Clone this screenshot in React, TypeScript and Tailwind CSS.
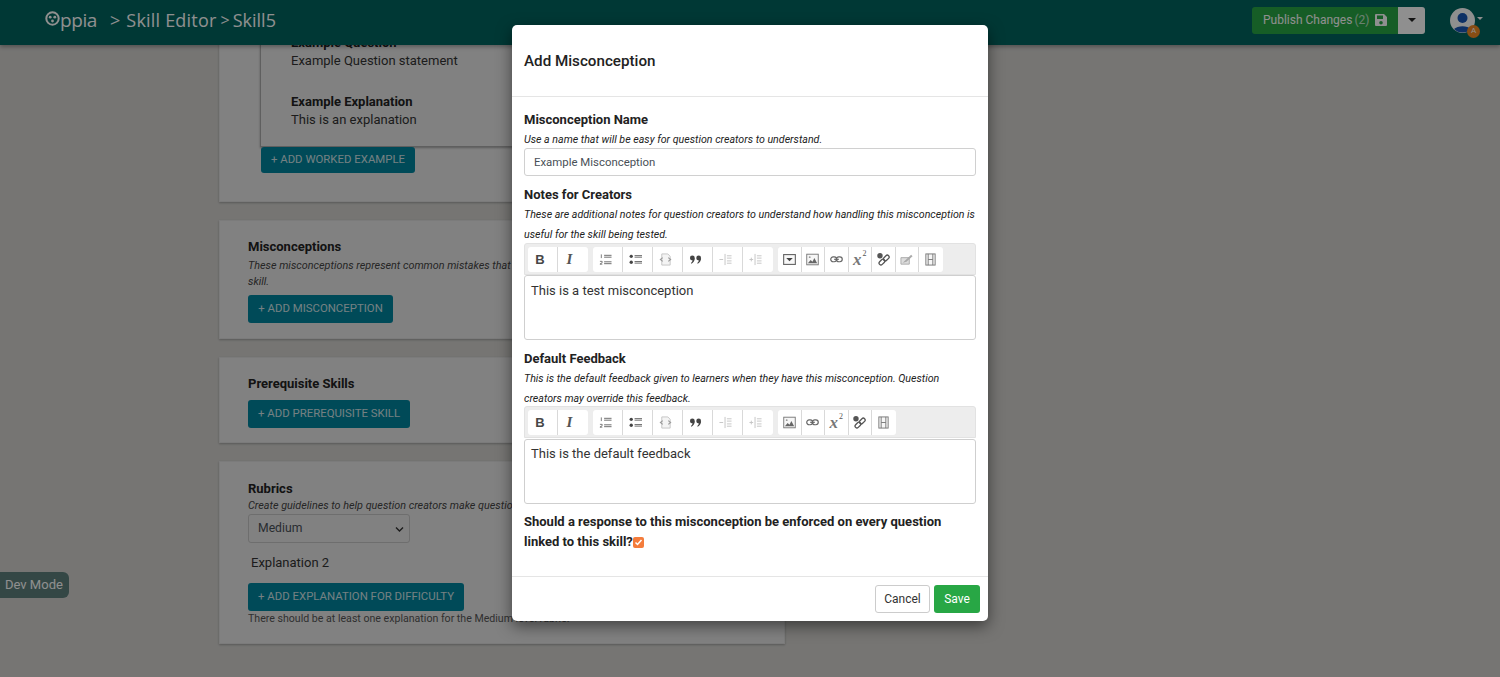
import React from "react";

const Ic = ({ children, w = 13, h = 13 }: { children: React.ReactNode; w?: number; h?: number }) => (
  <svg width={w} height={h} viewBox="0 0 14 14" fill="none">{children}</svg>
);

const Bold = () => <span className="text-[13px] font-bold leading-none text-[#474747] [font-family:'Liberation_Sans',sans-serif]">B</span>;
const Italic = () => <span className="pr-[2px] text-[15px] font-bold italic leading-none text-[#555] [font-family:'Liberation_Serif',serif]">I</span>;
const Num = () => (
  <Ic>
    <path d="M5.5 2.5h8M5.5 4.5h8M5.5 9.5h8M5.5 11.5h8" stroke="#666" strokeWidth="1" />
    <path d="M2.5 1.5v4M1 9h2.4v1.4L1 12h2.6" stroke="#666" strokeWidth="0.9" />
  </Ic>
);
const Bul = () => (
  <Ic>
    <circle cx="2.4" cy="3.6" r="1.8" fill="#444" />
    <circle cx="2.4" cy="10" r="1.8" fill="#444" />
    <path d="M6 2.8h8M6 4.5h8M6 9.2h8M6 10.9h8" stroke="#666" strokeWidth="1" />
  </Ic>
);
const Block = () => (
  <Ic>
    <path d="M3 1h6.5L12 3.5V13H3z" stroke="#c4c4c4" fill="#f4f4f4" />
    <path d="M4 5L1.5 7 4 9M10 5l2.5 2L10 9" stroke="#9a9a9a" strokeWidth="1.2" />
  </Ic>
);
const Quote = () => (
  <Ic>
    <circle cx="3.6" cy="5.4" r="2.6" fill="#444" />
    <path d="M6.2 5.4c0 3-1.4 5.2-3.6 6.2l-.5-.8c1.2-.9 1.8-2 1.8-3.4z" fill="#444" />
    <circle cx="10.4" cy="5.4" r="2.6" fill="#444" />
    <path d="M13 5.4c0 3-1.4 5.2-3.6 6.2l-.5-.8c1.2-.9 1.8-2 1.8-3.4z" fill="#444" />
  </Ic>
);
const Indent = ({ flip }: { flip?: boolean }) => (
  <Ic>
    <path d="M6.5 1v12" stroke="#c4c4c4" strokeWidth="1" />
    <path d="M8.5 3h5M8.5 5.5h5M8.5 8.5h5M8.5 11h5" stroke="#c4c4c4" strokeWidth="1" />
    <path d={flip ? "M0.5 7h4M2.5 5v4" : "M0.5 7h4"} stroke="#c4c4c4" strokeWidth="1" />
  </Ic>
);
const Collapse = () => (
  <Ic>
    <rect x="0.7" y="1.7" width="12.6" height="10.6" stroke="#666" strokeWidth="1.2" fill="#f8f8f8" />
    <path d="M3.5 5.5h7L7 9z" fill="#444" />
  </Ic>
);
const Pic = () => (
  <Ic>
    <rect x="0.8" y="1.3" width="12.4" height="11.4" stroke="#777" fill="#f6f6f6" />
    <path d="M2 11l3-3.5 2 2 2-4 3 5.5z" fill="#666" />
    <circle cx="4" cy="4.5" r="1" fill="#999" />
  </Ic>
);
const Link = () => (
  <Ic>
    <rect x="0.8" y="4.2" width="6.4" height="5.2" rx="2.6" stroke="#666" strokeWidth="1.3" />
    <rect x="6.8" y="4.2" width="6.4" height="5.2" rx="2.6" stroke="#666" strokeWidth="1.3" />
    <path d="M4.5 6.8h5" stroke="#666" strokeWidth="1.3" />
  </Ic>
);
const Sup = () => (
  <span className="relative pr-[5px] text-[17px] font-bold italic leading-none text-[#777] [font-family:'Liberation_Serif',serif]">
    x
    <span className="absolute right-0 top-[-1px] text-[8px] font-normal not-italic text-[#555]">2</span>
  </span>
);
const Concept = () => (
  <Ic>
    <circle cx="3.2" cy="3" r="2.9" fill="#555" />
    <rect x="6.5" y="3.4" width="7" height="4" rx="2" transform="rotate(-45 10 5.4)" stroke="#555" strokeWidth="1.4" />
    <rect x="1.8" y="7.8" width="7" height="4" rx="2" transform="rotate(-45 5.3 9.8)" stroke="#555" strokeWidth="1.4" />
  </Ic>
);
const Draw = () => (
  <Ic>
    <path d="M1 5h9v7H1z" stroke="#aaa" fill="#ddd" />
    <path d="M3 10.5l4-1 6.5-6-1.5-1.5-6.5 6z" fill="#aaa" />
  </Ic>
);
const Film = () => (
  <Ic>
    <rect x="2" y="1" width="10" height="12" stroke="#777" fill="#f6f6f6" />
    <path d="M4.5 1v12M9.5 1v12M4.5 7h5" stroke="#777" />
  </Ic>
);

const Btn = ({ w, children, last }: { w: string; children: React.ReactNode; last?: boolean }) => (
  <div className={`flex h-[25px] items-center justify-center ${w} ${last ? "" : "border-r border-[#d9d9d9]"}`}>{children}</div>
);

const Group = ({ children }: { children: React.ReactNode }) => (
  <div className="flex items-center rounded-[3px] bg-white">{children}</div>
);

const Toolbar = ({ extended }: { extended?: boolean }) => (
  <div className="flex h-[32px] items-center gap-[5px] rounded-t-[3px] border border-[#e2e2e2] bg-[#ededed] pl-[3px]">
    <Group>
      <Btn w="w-[30px] pr-[5px]"><Bold /></Btn>
      <Btn w="w-[30px] pr-[5px]" last><Italic /></Btn>
    </Group>
    <Group>
      <Btn w="w-[30px] pr-[5px]"><Num /></Btn>
      <Btn w="w-[30px] pr-[5px]"><Bul /></Btn>
      <Btn w="w-[30px] pr-[5px]"><Block /></Btn>
      <Btn w="w-[30px] pr-[5px]"><Quote /></Btn>
      <Btn w="w-[30px] pr-[5px]"><Indent /></Btn>
      <Btn w="w-[30px] pr-[5px]" last><Indent flip /></Btn>
    </Group>
    <Group>
      {extended && <Btn w="w-[23.5px]"><Collapse /></Btn>}
      <Btn w="w-[23.5px]"><Pic /></Btn>
      <Btn w="w-[23.5px]"><Link /></Btn>
      <Btn w="w-[23.5px]"><Sup /></Btn>
      <Btn w="w-[23.5px]"><Concept /></Btn>
      {extended && <Btn w="w-[23.5px]"><Draw /></Btn>}
      <Btn w="w-[23.5px]" last><Film /></Btn>
    </Group>
  </div>
);

const Editor = ({ text, cls }: { text: string; cls: string }) => (
  <div className={`h-[65px] rounded-[3px] border border-[#cfcfcf] bg-white px-[6px] text-[13px] leading-[19px] text-[#333] ${cls}`}>{text}</div>
);

const Label = ({ children }: { children: React.ReactNode }) => (
  <div className="text-[13px] font-bold leading-[20px] text-[#222]">{children}</div>
);

const Hint = ({ children }: { children: React.ReactNode }) => (
  <div className="text-[10.65px] italic leading-[20px] text-[#222]">{children}</div>
);

const Teal = ({ children, cls }: { children: React.ReactNode; cls?: string }) => (
  <div className={`flex items-center justify-center rounded-[3px] bg-[#00849e] text-[11.4px] text-[#d0e4e8] ${cls ?? ""}`}>{children}</div>
);

const Card = ({ children, cls }: { children: React.ReactNode; cls?: string }) => (
  <section className={`overflow-hidden border border-[#dcdcdc] bg-[#e6e6e6] pl-[28px] shadow-[0_1px_2px_rgba(0,0,0,0.25)] ${cls ?? ""}`}>{children}</section>
);

export default function App() {
  return (
    <div className="relative h-[677px] w-[1500px] overflow-hidden bg-[#d2d1ce] [font-family:Roboto,sans-serif]">
      <header className="relative z-10 flex h-[45px] items-center bg-[#00645f] pb-[5px] pl-[45px] pr-[25px] shadow-[0_2px_4px_rgba(0,0,0,0.3)]">
        <div className="flex items-center text-white [font-family:'Open_Sans',sans-serif]">
          <svg width="15" height="15" viewBox="0 0 15 15" fill="none" className="mt-[-4px]">
            <circle cx="7.5" cy="7.5" r="6.2" stroke="#fff" strokeWidth="2" />
            <circle cx="5.2" cy="6.2" r="1.4" fill="#fff" />
            <circle cx="9.8" cy="6.2" r="1.4" fill="#fff" />
            <circle cx="7.5" cy="10" r="1.4" fill="#fff" />
          </svg>
          <span className="text-[19px] font-medium leading-[24px] tracking-[-0.4px]">ppia</span>
          <span className="ml-[13px] text-[18px] leading-[24px]">&gt;</span>
          <span className="ml-[6px] text-[18px] leading-[24px] tracking-[0.2px]">Skill Editor</span>
          <span className="ml-[4px] text-[16px] leading-[24px]">&gt;</span>
          <span className="ml-[3px] text-[18px] leading-[24px]">Skill5</span>
        </div>
        <div className="ml-auto flex items-center">
          <div className="flex h-[27px] w-[146px] items-center rounded-l-[3px] bg-[#28a745] pl-[11px] text-[12px] text-white">
            <span>Publish Changes</span>
            <span className="ml-[2px] opacity-70">(2)</span>
            <svg className="ml-[6px]" width="12" height="12" viewBox="0 0 12 12"><path d="M1 0h8l3 3v8a1 1 0 0 1-1 1H1a1 1 0 0 1-1-1V1a1 1 0 0 1 1-1zm1 1.5V5h6V1.5zM6 7a1.8 1.8 0 1 0 0 3.6A1.8 1.8 0 0 0 6 7z" fill="#fff" fillRule="evenodd" /></svg>
          </div>
          <div className="flex h-[27px] w-[27px] items-center justify-center rounded-r-[3px] bg-[#ffffff]">
            <div className="h-0 w-0 border-x-[4px] border-t-[4px] border-x-transparent border-t-[#222]" />
          </div>
          <div className="relative ml-[25px] h-[25px] w-[25px] rounded-full bg-white">
            <svg width="25" height="25" viewBox="0 0 25 25">
              <circle cx="12.5" cy="10" r="5" fill="#1a56b5" />
              <path d="M4 21a10 6 0 0 1 17 0 12 12 0 0 1-17 0z" fill="#1a56b5" />
            </svg>
            <div className="absolute left-[17px] top-[17px] flex h-[13px] w-[13px] items-center justify-center rounded-full bg-[#f08a24] text-[8px] text-white">A</div>
            <div className="absolute left-[27px] top-[9px] h-0 w-0 border-x-[3px] border-t-[3px] border-x-transparent border-t-white" />
          </div>
        </div>
      </header>

      <main className="relative ml-[219px] mt-[-45px] flex w-[566px] flex-col gap-[18px]">
        <Card cls="h-[202px]">
          <div className="ml-[12px] h-[146px] w-[400px] border border-[#aaa] pl-[30px] pt-[32px] text-[13px] leading-[18px] text-[#333] shadow-[0_1px_2px_rgba(0,0,0,0.3)]">
            <div className="font-bold text-[#222]">Example Question</div>
            <div>Example Question statement</div>
            <div className="mt-[23px] font-bold text-[#222]">Example Explanation</div>
            <div>This is an explanation</div>
          </div>
          <Teal cls="ml-[13px] h-[26px] w-[154px]">+ ADD WORKED EXAMPLE</Teal>
        </Card>
        <Card cls="h-[119px] pt-[17px]">
          <div className="text-[13px] font-bold leading-[18px] text-[#222]">Misconceptions</div>
          <div className="mt-[2px] whitespace-nowrap text-[10.8px] italic leading-[16px] text-[#444]">These misconceptions represent common mistakes that</div>
          <div className="text-[10.8px] italic leading-[16px] text-[#444]">skill.</div>
          <Teal cls="mt-[5px] h-[28px] w-[145px]">+ ADD MISCONCEPTION</Teal>
        </Card>
        <Card cls="h-[86px] pt-[17px]">
          <div className="text-[13px] font-bold leading-[18px] text-[#222]">Prerequisite Skills</div>
          <Teal cls="mt-[7px] h-[28px] w-[162px]">+ ADD PREREQUISITE SKILL</Teal>
        </Card>
        <Card cls="h-[183px] pt-[18px]">
          <div className="text-[13px] font-bold leading-[18px] text-[#222]">Rubrics</div>
          <div className="whitespace-nowrap text-[10.8px] italic leading-[16px] text-[#444]">Create guidelines to help question creators make questions</div>
          <div className="relative flex h-[29px] w-[162px] items-center rounded-[3px] border border-[#c4c4c4] pl-[9px] text-[12.2px] text-[#495057]">
            Medium
            <svg className="absolute right-[5px] top-[11px]" width="9" height="7" viewBox="0 0 9 7"><path d="M1 1.5l3.5 3.5L8 1.5" stroke="#333" strokeWidth="1.4" fill="none" /></svg>
          </div>
          <div className="ml-[3px] mt-[11px] text-[13px] leading-[18px] text-[#333]">Explanation 2</div>
          <Teal cls="mt-[11px] h-[28px] w-[216px]">+ ADD EXPLANATION FOR DIFFICULTY</Teal>
          <div className="whitespace-nowrap text-[10.6px] leading-[16px] text-[#555]">There should be at least one explanation for the Medium level rubric.</div>
        </Card>
      </main>

      <div className="absolute bottom-[79px] left-0 z-20 flex h-[26px] w-[69px] items-center rounded-r-[6px] bg-[#5d7f7c] pl-[5px] text-[13px] text-white">Dev Mode</div>

      <div className="absolute inset-0 z-30 bg-black/[0.44]" />

      <div className="absolute left-[512px] top-[25px] z-40 flex h-[596px] w-[476px] flex-col rounded-[5px] bg-white shadow-[0_5px_15px_rgba(0,0,0,0.5)]">
        <div className="flex h-[72px] items-center border-b border-[#e5e5e5] pl-[12px] pt-[2px] text-[15.2px] font-medium text-[#222]">Add Misconception</div>
        <div className="flex-1 px-[12px] pt-[13px]">
          <Label>Misconception Name</Label>
          <Hint>Use a name that will be easy for question creators to understand.</Hint>
          <div className="mt-[-2px] flex h-[28px] items-center rounded-[3px] border border-[#d0d0d0] pl-[9px] pt-[1px] text-[11.4px] text-[#495057]">Example Misconception</div>
          <div className="mt-[9px]"><Label>Notes for Creators</Label></div>
          <Hint>These are additional notes for question creators to understand how handling this misconception is useful for the skill being tested.</Hint>
          <div className="mt-[-2px]"><Toolbar extended /></div>
          <Editor text="This is a test misconception" cls="py-[5px]" />
          <div className="mt-[9px]"><Label>Default Feedback</Label></div>
          <Hint>This is the default feedback given to learners when they have this misconception. Question creators may override this feedback.</Hint>
          <div className="mt-[-3px]"><Toolbar /></div>
          <div className="mt-[1px]"><Editor text="This is the default feedback" cls="py-[4px]" /></div>
          <div className="mt-[8px] text-[13px] font-bold leading-[20px] text-[#222]">
            Should a response to this misconception be enforced on every question linked to this skill?
            <span className="relative top-[1px] inline-flex h-[11px] w-[11px] items-center justify-center rounded-[2px] bg-[#f47c3c]">
              <svg width="9" height="9" viewBox="0 0 9 9"><path d="M1.5 4.5l2 2 4-4.5" stroke="#fff" strokeWidth="1.5" fill="none" /></svg>
            </span>
          </div>
        </div>
        <div className="flex h-[45px] items-center justify-end gap-[4px] border-t border-[#e5e5e5] pr-[8px]">
          <div className="flex h-[28px] w-[55px] items-center justify-center rounded-[3px] border border-[#ccc] bg-white text-[12px] text-[#333]">Cancel</div>
          <div className="flex h-[28px] w-[46px] items-center justify-center rounded-[3px] bg-[#28a745] text-[12px] text-white">Save</div>
        </div>
      </div>
    </div>
  );
}
